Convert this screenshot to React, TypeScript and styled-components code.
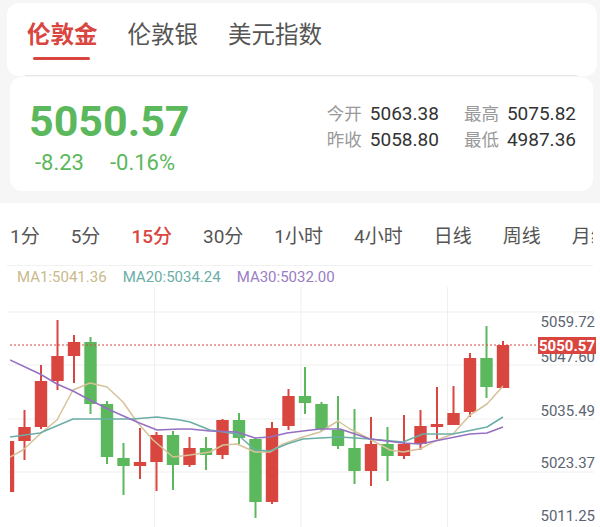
import { FC } from "react";
import styled, { createGlobalStyle } from "styled-components";

const GlobalStyle = createGlobalStyle`
  html, body {
    margin: 0;
    padding: 0;
    background: #f6f6f6;
    font-family: Roboto, "Noto Sans CJK SC", sans-serif;
  }
`;

const RED = "#d9463f";
const GREEN = "#5cb85c";

const Page = styled.div`
  width: 600px;
  height: 527px;
  overflow: hidden;
  display: flex;
  flex-direction: column;
`;

const TabCard = styled.div`
  margin: 3px 3px 0 7px;
  height: 74px;
  background: #fff;
  border-radius: 12px;
  padding: 0 20px 0 18px;
  box-sizing: border-box;
`;

const TabRow = styled.div`
  display: flex;
  align-items: center;
  gap: 30px;
  height: 72px;
  padding-left: 2px;
  border-bottom: 1px solid #e6e6e6;
`;

const Tab = styled.div<{ active?: boolean }>`
  position: relative;
  font-size: 23.5px;
  line-height: 1;
  color: ${({ active }) => (active ? RED : "#555")};
  font-weight: ${({ active }) => (active ? 600 : 400)};
  padding-bottom: 6px;

  &::after {
    content: "";
    display: ${({ active }) => (active ? "block" : "none")};
    position: absolute;
    left: 6px;
    right: 8px;
    bottom: -6px;
    height: 3px;
    border-radius: 2px;
    background: ${RED};
  }
`;

const PriceCard = styled.div`
  margin: 1px 7px 0 10px;
  height: 115px;
  background: #fff;
  border-radius: 12px;
  display: flex;
  justify-content: space-between;
  align-items: center;
  padding: 0 17px 0 19px;
  box-sizing: border-box;
`;

const PriceBlock = styled.div`
  display: flex;
  flex-direction: column;
  padding-top: 4px;
`;

const BigPrice = styled.div`
  font-size: 43px;
  font-weight: 700;
  line-height: 48px;
  color: ${GREEN};
`;

const ChangeRow = styled.div`
  display: flex;
  gap: 26px;
  padding-left: 6px;
  margin-top: 5px;
  font-size: 22px;
  line-height: 26px;
  color: ${GREEN};
`;

const StatGrid = styled.div`
  display: grid;
  grid-template-columns: auto auto;
  column-gap: 25px;
  row-gap: 6px;
  margin-top: -14px;
`;

const Stat = styled.div`
  display: flex;
  align-items: baseline;
  gap: 8px;
  line-height: 20px;
`;

const StatLabel = styled.span`
  font-size: 17.5px;
  color: #999;
`;

const StatValue = styled.span`
  font-size: 19px;
  color: #333;
`;

const ChartSection = styled.div`
  margin-top: 12px;
  flex: 1;
  background: #fff;
  display: flex;
  flex-direction: column;
`;

const PeriodRow = styled.div`
  display: flex;
  align-items: center;
  gap: 31px;
  height: 62px;
  margin: 0 7px;
  padding-left: 3px;
  white-space: nowrap;
  overflow: hidden;
  border-bottom: 1px solid #f1f1f1;
`;

const Period = styled.span<{ active?: boolean }>`
  font-size: 19px;
  color: ${({ active }) => (active ? RED : "#555")};
  font-weight: ${({ active }) => (active ? 500 : 400)};
  flex-shrink: 0;
`;

const Legend = styled.div`
  display: flex;
  gap: 16px;
  height: 21px;
  padding-left: 17px;
  align-items: center;
  font-size: 15px;
`;

const LegendItem = styled.span<{ color: string }>`
  color: ${({ color }) => color};
`;

const ChartSvg = styled.svg`
  display: block;
  width: 600px;
  height: 240px;
`;

type Candle = [number, number, number, number, "r" | "g"];

// bodyTop, bodyBottom, wickTop, wickBottom (page y)
const candles: Candle[] = [
  [444, 495, 444, 495, "r"],
  [430, 444, 413, 463, "r"],
  [384, 430, 368, 432, "r"],
  [359, 384, 323, 393, "r"],
  [345, 359, 338, 386, "r"],
  [345, 407, 340, 417, "g"],
  [407, 460, 404, 467, "g"],
  [461, 469, 446, 498, "g"],
  [465, 469, 431, 482, "r"],
  [438, 465, 435, 494, "r"],
  [438, 468, 434, 493, "g"],
  [451, 468, 440, 470, "r"],
  [451, 458, 440, 473, "g"],
  [423, 458, 422, 462, "r"],
  [423, 441, 416, 447, "g"],
  [442, 505, 441, 521, "g"],
  [431, 505, 425, 507, "r"],
  [399, 429, 392, 433, "r"],
  [399, 406, 370, 417, "g"],
  [407, 432, 405, 434, "g"],
  [433, 449, 399, 452, "g"],
  [451, 474, 412, 487, "g"],
  [447, 474, 420, 489, "r"],
  [447, 459, 430, 484, "g"],
  [447, 459, 418, 462, "r"],
  [429, 447, 413, 453, "r"],
  [427, 430, 390, 442, "r"],
  [416, 428, 389, 428, "r"],
  [361, 415, 356, 420, "r"],
  [361, 390, 329, 401, "g"],
  [348, 391, 344, 391, "r"],
];

const ma30 =
  "10,363 40,377 57,387 73,394 90,403 110,413 137,425 157,433 180,432 190,432 210,434 237,435 255,441 270,440 287,436 303,434 320,432 340,432 370,442 403,446 420,447 440,443 470,437 487,436 503,430";
const ma20 =
  "10,440 40,436 73,422 133,422 157,420 180,423 190,425 210,433 237,437 255,453 270,454 287,447 303,442 320,441 340,440 370,442 403,445 423,437 453,437 487,430 503,420";
const ma1 =
  "10,460 23,453 40,437 57,423 73,393 90,386 107,390 123,405 137,425 153,443 173,460 190,458 210,455 223,448 237,447 255,455 270,455 283,447 303,440 320,435 338,424 350,432 360,437 390,453 403,455 420,452 437,443 453,437 470,418 487,407 503,389";

const gridY = [315, 368, 422, 475];
const gridX = [154.5, 301, 447.5];
const axis: [string, number][] = [
  ["5059.72", 330],
  ["5047.60", 365],
  ["5035.49", 419],
  ["5023.37", 471],
  ["5011.25", 524],
];

const KChart: FC = () => (
  <ChartSvg viewBox="0 290 600 240">
    <defs>
      <clipPath id="plot">
        <rect x="10" y="290" width="530" height="240" />
      </clipPath>
    </defs>
    {gridY.map((y) => (
      <line key={y} x1="8" x2="594" y1={y} y2={y} stroke="#efefef" strokeWidth="1" />
    ))}
    {gridX.map((x) => (
      <line key={x} x1={x} x2={x} y1="290" y2="530" stroke="#efefef" strokeWidth="1" />
    ))}
    <g clipPath="url(#plot)">
      {candles.map(([bt, bb, wt, wb, c], i) => {
        const cx = 8 + 16.5 * i;
        const fill = c === "r" ? RED : GREEN;
        return (
          <g key={i} fill={fill}>
            <rect x={cx - 1} y={wt} width="2" height={wb - wt} />
            <rect x={cx - 6.2} y={bt} width="12.4" height={Math.max(bb - bt, 2)} />
          </g>
        );
      })}
      <polyline points={ma1} fill="none" stroke="#d6c29a" strokeWidth="1.5" strokeLinejoin="round" />
      <polyline points={ma20} fill="none" stroke="#6aaea6" strokeWidth="1.5" strokeLinejoin="round" />
      <polyline points={ma30} fill="none" stroke="#9570c2" strokeWidth="1.5" strokeLinejoin="round" />
    </g>
    <line x1="10" x2="538" y1="348" y2="348" stroke={RED} strokeWidth="1.2" strokeDasharray="2 2" />
    {axis.map(([t, y]) => (
      <text
        key={t}
        x="595"
        y={y}
        textAnchor="end"
        fontSize="15"
        fill="#5b6472"
        fontFamily="Roboto, sans-serif"
      >
        {t}
      </text>
    ))}
    <rect x="538" y="340" width="58" height="17" fill={RED} />
    <text
      x="595"
      y="354"
      textAnchor="end"
      fontSize="15"
      fontWeight="700"
      fill="#fff"
      fontFamily="Roboto, sans-serif"
    >
      5050.57
    </text>
  </ChartSvg>
);

const periods = ["1分", "5分", "15分", "30分", "1小时", "4小时", "日线", "周线", "月线"];

export default function App() {
  return (
    <Page>
      <GlobalStyle />
      <TabCard>
        <TabRow>
          <Tab active>伦敦金</Tab>
          <Tab>伦敦银</Tab>
          <Tab>美元指数</Tab>
        </TabRow>
      </TabCard>
      <PriceCard>
        <PriceBlock>
          <BigPrice>5050.57</BigPrice>
          <ChangeRow>
            <span>-8.23</span>
            <span>-0.16%</span>
          </ChangeRow>
        </PriceBlock>
        <StatGrid>
          <Stat>
            <StatLabel>今开</StatLabel>
            <StatValue>5063.38</StatValue>
          </Stat>
          <Stat>
            <StatLabel>最高</StatLabel>
            <StatValue>5075.82</StatValue>
          </Stat>
          <Stat>
            <StatLabel>昨收</StatLabel>
            <StatValue>5058.80</StatValue>
          </Stat>
          <Stat>
            <StatLabel>最低</StatLabel>
            <StatValue>4987.36</StatValue>
          </Stat>
        </StatGrid>
      </PriceCard>
      <ChartSection>
        <PeriodRow>
          {periods.map((p) => (
            <Period key={p} active={p === "15分"}>
              {p}
            </Period>
          ))}
        </PeriodRow>
        <Legend>
          <LegendItem color="#c9b98c">MA1:5041.36</LegendItem>
          <LegendItem color="#6aaea6">MA20:5034.24</LegendItem>
          <LegendItem color="#9a7cc4">MA30:5032.00</LegendItem>
        </Legend>
        <KChart />
      </ChartSection>
    </Page>
  );
}
